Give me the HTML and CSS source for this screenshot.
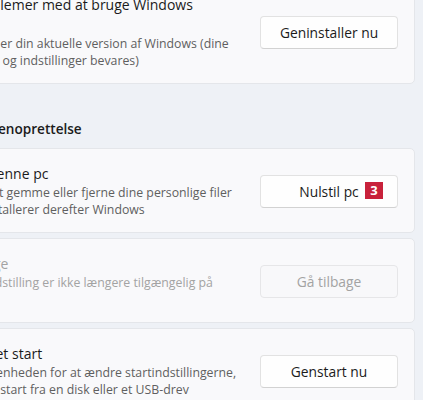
FILE: index.html
```html
<!DOCTYPE html>
<html lang="da">
<head>
<meta charset="utf-8">
<title>Genoprettelse</title>
<link rel="stylesheet" href="styles.css">
</head>
<body>
<div class="page">
  <div class="card">
    <div class="text">
      <div class="title">Løs problemer med at bruge Windows<br>Update</div>
      <div class="desc">Geninstaller din aktuelle version af Windows (dine apps, filer og indstillinger bevares)</div>
    </div>
    <button class="btn">Geninstaller nu</button>
  </div>

  <div class="section">Indstillinger for genoprettelse</div>

  <div class="card">
    <div class="text">
      <div class="title">Nulstil denne pc</div>
      <div class="desc">Vælg nu at gemme eller fjerne dine personlige filer og geninstallerer derefter Windows</div>
    </div>
    <button class="btn">Nulstil pc<span class="badge">3</span></button>
  </div>

  <div class="card disabled">
    <div class="text">
      <div class="title">Gå tilbage</div>
      <div class="desc">Denne indstilling er ikke længere tilgængelig på denne pc</div>
    </div>
    <button class="btn" disabled>Gå tilbage</button>
  </div>

  <div class="card">
    <div class="text">
      <div class="title">Avanceret start</div>
      <div class="desc">Genstart enheden for at ændre startindstillingerne, herunder start fra en disk eller et USB-drev</div>
    </div>
    <button class="btn">Genstart nu</button>
  </div>
</div>
</body>
</html>
```

FILE: styles.css
```css
html, body {
  margin: 0;
  padding: 0;
  background: #eef1f6;
  overflow: hidden;
}
body {
  font-family: "Open Sans", "Noto Sans", sans-serif;
  color: #1b1b1b;
  width: 423px;
  height: 400px;
}
.page {
  margin: -21px 8px 0 -114px;
  display: flex;
  flex-direction: column;
  gap: 5px;
}
.card {
  display: flex;
  align-items: center;
  background: #f9f9fb;
  border: 1px solid #e4e6ea;
  border-radius: 5px;
  padding: 15px 16px 14px 56px;
}
.text {
  flex: 1;
  min-width: 0;
  margin-right: 17px;
}
.title {
  font-size: 14px;
  line-height: 20px;
}
.desc {
  font-size: 12.3px;
  line-height: 17px;
  color: #5f5f5f;
}
.section {
  font-weight: 600;
  font-size: 13.6px;
  line-height: 20px;
  margin: 30px 0 4px 0;
}
.btn {
  position: relative;
  flex: none;
  width: 138px;
  height: 33px;
  background: #fefefe;
  border: 1px solid #e2e2e2;
  border-bottom-color: #d2d2d2;
  border-radius: 4px;
  font-family: inherit;
  font-size: 13.8px;
  color: #1b1b1b;
  padding: 0;
}
.btn:disabled {
  background: #f8f8fa;
  border-color: #e6e6e8;
  color: #a3a3a3;
}
.disabled .title, .disabled .desc {
  color: #a3a3a3;
}
.badge {
  position: absolute;
  left: 104px;
  top: 6px;
  width: 18px;
  height: 17px;
  background: #c8213b;
  color: #fff;
  font-weight: 700;
  font-size: 13px;
  line-height: 17px;
  text-align: center;
}
```
